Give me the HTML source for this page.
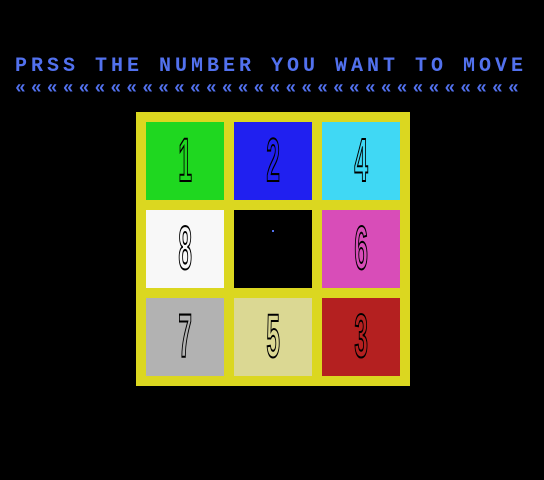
<!DOCTYPE html>
<html><head><style>
html,body{margin:0;padding:0;background:#000;width:544px;height:480px;overflow:hidden}
.h{position:absolute;left:15px;top:55px;font-family:"Liberation Mono",monospace;font-size:20px;color:#5271ee;letter-spacing:4px;white-space:pre;font-weight:bold}
.a{position:absolute;left:15px;top:79px;font-family:"Liberation Mono",monospace;font-size:18px;color:#5271ee;letter-spacing:5.1px;white-space:pre;font-weight:bold}
.box{position:absolute;left:136px;top:112px;width:274px;height:274px;background:#dbd720}
.t{position:absolute;width:78px;height:78px;display:flex;align-items:center;justify-content:center}
.t span{font-family:"Liberation Sans",sans-serif;font-size:58px;font-weight:bold;line-height:1;color:transparent;-webkit-text-stroke:2px #000;transform:scale(0.42,1.05);display:block}
</style></head><body>
<div class="h">PRSS THE NUMBER YOU WANT TO MOVE</div>
<div class="a">««««««««««««««««««««««««««««««««</div>
<div class="box">
<div class="t" style="left:10px;top:10px;background:#1fd720"><span>1</span></div>
<div class="t" style="left:98px;top:10px;background:#2020f0"><span>2</span></div>
<div class="t" style="left:186px;top:10px;background:#40d8f4"><span>4</span></div>
<div class="t" style="left:10px;top:98px;background:#f8f8f8"><span>8</span></div>
<div class="t" style="left:98px;top:98px;background:#000"><i style="position:absolute;left:38px;top:20px;width:2px;height:2px;background:#5271ee"></i></div>
<div class="t" style="left:186px;top:98px;background:#d84db8"><span>6</span></div>
<div class="t" style="left:10px;top:186px;background:#b2b2b2"><span>7</span></div>
<div class="t" style="left:98px;top:186px;background:#dbd893"><span>5</span></div>
<div class="t" style="left:186px;top:186px;background:#b42020"><span>3</span></div>
</div>
</body></html>
